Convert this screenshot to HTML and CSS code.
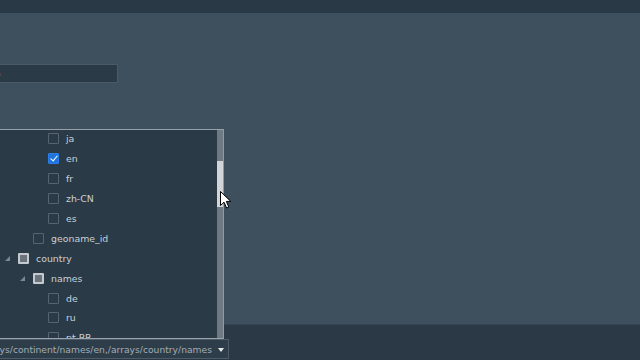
FILE: index.html
```html
<!DOCTYPE html>
<html lang="en">
<head>
  <meta charset="UTF-8" />
  <title>Field picker</title>
  <link rel="stylesheet" href="styles.css">
</head>
<body>
  <div class="topbar"></div>

  <div class="main">
    <div class="search-field"><span class="search-tail">o</span></div>
  </div>

  <div class="bottombar">
    <div class="picker">
      <div class="picker-panel">
        <ul class="tree">
          <li class="row lvl3"><span class="twisty"></span><span class="box"></span><span class="label">ja</span></li>
          <li class="row lvl3"><span class="twisty"></span><span class="box checked"></span><span class="label">en</span></li>
          <li class="row lvl3"><span class="twisty"></span><span class="box"></span><span class="label">fr</span></li>
          <li class="row lvl3"><span class="twisty"></span><span class="box"></span><span class="label">zh-CN</span></li>
          <li class="row lvl3"><span class="twisty"></span><span class="box"></span><span class="label">es</span></li>
          <li class="row lvl2"><span class="twisty"></span><span class="box"></span><span class="label">geoname_id</span></li>
          <li class="row lvl1"><span class="twisty open"></span><span class="box partial"></span><span class="label">country</span></li>
          <li class="row lvl2"><span class="twisty open"></span><span class="box partial"></span><span class="label">names</span></li>
          <li class="row lvl3"><span class="twisty"></span><span class="box"></span><span class="label">de</span></li>
          <li class="row lvl3"><span class="twisty"></span><span class="box"></span><span class="label">ru</span></li>
          <li class="row lvl3"><span class="twisty"></span><span class="box"></span><span class="label">pt-BR</span></li>
        </ul>
        <div class="scrollbar"><div class="thumb"></div></div>
      </div>
      <div class="picker-value">
        <span class="value-text">/arrays/continent/names/en,/arrays/country/names</span>
        <span class="caret"></span>
      </div>
    </div>
  </div>

  <svg class="cursor" width="12" height="18" viewBox="0 0 12 18">
    <path d="M0.5 0.5 L0.5 14.5 L4 11.2 L6.6 17 L8.8 16 L6.3 10.4 L10.8 10.4 Z" fill="#fff" stroke="#000" stroke-width="1"/>
  </svg>
</body>
</html>
```

FILE: styles.css
```css
* {
  box-sizing: border-box;
}
body {
  margin: 0;
  width: 640px;
  height: 360px;
  overflow: hidden;
  background: #3e4f5e;
  font-family: 'DejaVu Sans', sans-serif;
  font-size: 9.4px;
  color: #c8d0d7;
  position: relative;
}
.topbar {
  height: 13px;
  background: #293946;
}
.main {
  height: 311px;
  padding-top: 51px;
}
.search-field {
  margin-left: -20px;
  width: 138px;
  height: 19px;
  background: #2b3a47;
  border: 1px solid #4b5a67;
  display: flex;
  align-items: center;
  overflow: hidden;
}
.search-tail {
  margin-left: 14px;
  color: #aab3ba;
  font-size: 9px;
}
.bottombar {
  height: 36px;
  background: #2b3946;
  border-top: 1px solid #34434f;
  padding-top: 14px;
}
.picker {
  position: relative;
  margin-left: -20px;
  width: 249px;
}
.picker-panel {
  position: absolute;
  left: 0;
  bottom: 100%;
  width: 244px;
  height: 210px;
  background: #2b3a47;
  border-top: 1px solid #97a1a9;
  border-right: 1px solid #8f9aa3;
  border-bottom: 1px solid #9aa4ac;
  overflow: hidden;
}
.tree {
  list-style: none;
  margin: -1px 0 0;
  padding: 0;
}
.row {
  height: 19.9px;
  display: flex;
  align-items: center;
}
.lvl1 { padding-left: 24px; }
.lvl2 { padding-left: 39px; }
.lvl3 { padding-left: 54px; }
.twisty {
  width: 14px;
  height: 20px;
  position: relative;
}
.twisty.open::after {
  content: '';
  position: absolute;
  left: 1px;
  top: 8px;
  border-style: solid;
  border-width: 0 0 5px 5px;
  border-color: transparent transparent #7c8790 transparent;
}
.box {
  width: 11px;
  height: 11px;
  border: 1px solid #566571;
  border-radius: 1px;
  margin-right: 7px;
  position: relative;
}
.box.checked {
  background: #1f74de;
  border-color: #2a7de6;
}
.box.checked::after {
  content: '';
  position: absolute;
  left: 3px;
  top: 0px;
  width: 3px;
  height: 6px;
  border: solid #fff;
  border-width: 0 1.5px 1.5px 0;
  transform: rotate(40deg);
}
.box.partial {
  border: 2px solid #c3c9ce;
  background: #6b747c;
}
.scrollbar {
  position: absolute;
  top: 0;
  right: 0;
  width: 6px;
  height: 100%;
  background: #6e7983;
}
.thumb {
  margin-top: 31px;
  height: 46px;
  background: #d2d5d8;
}
.picker-value {
  height: 20px;
  background: #2e3d4a;
  border: 1px solid #4c5b67;
  display: flex;
  align-items: center;
  justify-content: flex-end;
  padding-right: 16px;
  overflow: hidden;
  position: relative;
}
.value-text {
  white-space: nowrap;
  color: #a3acb4;
  font-size: 9.2px;
}
.caret {
  position: absolute;
  right: 4px;
  top: 8px;
  border-style: solid;
  border-width: 4px 3px 0 3px;
  border-color: #e6e9eb transparent transparent transparent;
}
.cursor {
  position: absolute;
  left: 220px;
  top: 191px;
}
```
